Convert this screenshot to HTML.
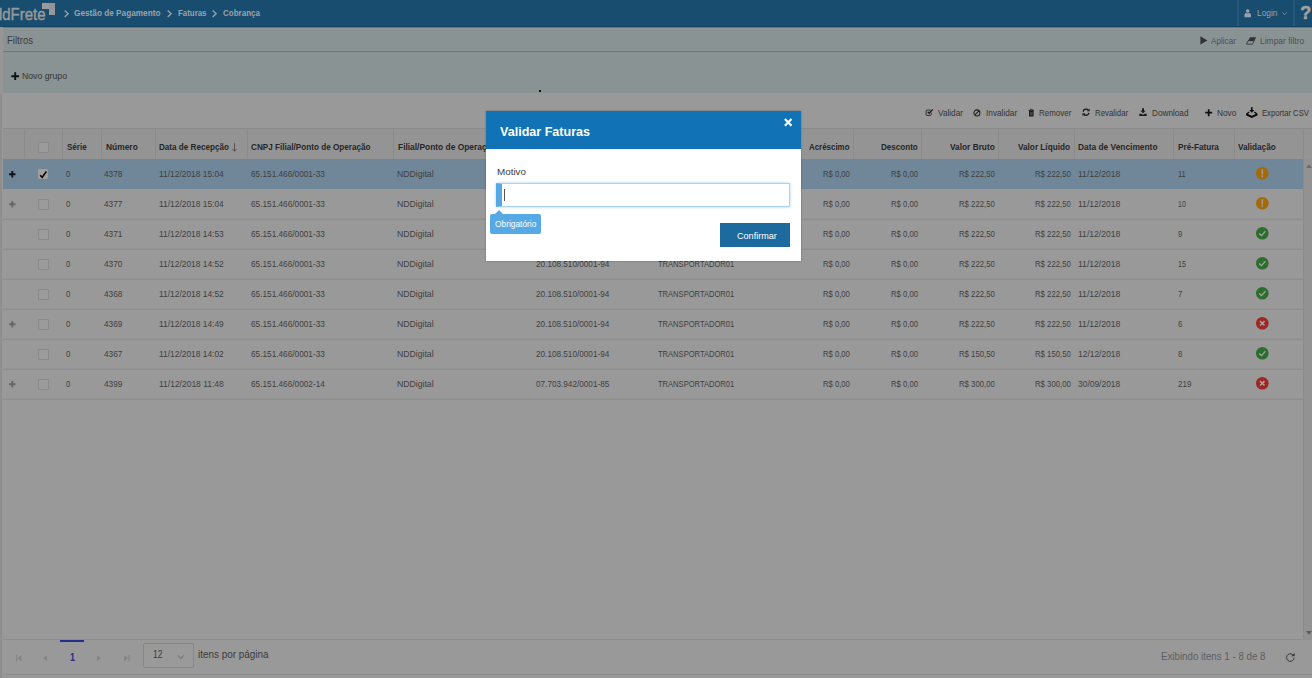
<!DOCTYPE html>
<html lang="pt-BR">
<head>
<meta charset="utf-8">
<title>Cobrança - Validar Faturas</title>
<style>
html,body{margin:0;padding:0;}
body{width:1312px;height:678px;overflow:hidden;background:#999999;position:relative;font-family:"Liberation Sans",sans-serif;}
.a{position:absolute;}
.t{position:absolute;white-space:pre;line-height:14px;height:14px;transform-origin:0 50%;font-family:"Liberation Sans",sans-serif;}
svg{position:absolute;overflow:visible;}
/* header */
#hdr{left:0;top:0;width:1312px;height:27px;background:#184d70;}
#filt{left:3px;top:27px;width:1309px;height:66px;background:#8a9394;}
#filtline{left:3px;top:51px;width:1309px;height:1px;background:#6f7778;}
#leftstrip{left:0;top:94px;width:1.7px;height:584px;background:#8e8e8e;}
/* grid */
#ghead{left:3px;top:128px;width:1309px;height:31px;background:#949494;border-top:1px solid #8a8a8a;box-sizing:border-box;}
.vl{position:absolute;top:128px;width:1px;height:31px;background:#8b8b8b;}
.hl{position:absolute;left:3px;width:1300px;height:1px;background:#8d8d8d;}
#sel{left:3px;top:159px;width:1300px;height:30px;background:#6f8799;}
.cb{position:absolute;width:10.7px;height:10.7px;box-sizing:border-box;border:1px solid #8a8a8a;background:#9b9b9b;border-radius:1px;}
#scroll{left:1303px;top:159px;width:9px;height:480px;background:#929292;border-left:1px solid #8c8c8c;box-sizing:border-box;}
#pager{left:3px;top:639px;width:1309px;height:36px;border-top:1px solid #8e8e8e;border-bottom:1px solid #8e8e8e;box-sizing:border-box;background:#999;}
/* modal */
#modal{left:486px;top:111px;width:314.6px;height:150px;background:#fff;z-index:20;box-shadow:0 0 2px rgba(0,0,0,.3);}
#mtitle{left:486px;top:111px;width:314.6px;height:38px;background:#1173b5;z-index:21;}
#minput{left:496px;top:183px;width:294px;height:24px;box-sizing:border-box;border:1px solid #a9d2f3;border-left:6px solid #55aae5;background:#fff;z-index:22;box-shadow:0 0 3px rgba(102,175,233,.6);border-radius:1px;}
#mcursor{left:504px;top:189px;width:1px;height:12px;background:#555;z-index:23;}
#mtip{left:490px;top:214px;width:51px;height:20px;background:#55aae5;border-radius:2px;z-index:23;}
#mtiparrow{left:494px;top:209.5px;width:0;height:0;border-left:5px solid transparent;border-right:5px solid transparent;border-bottom:5px solid #55aae5;z-index:23;}
#mbtn{left:720px;top:223px;width:70px;height:24px;background:#1d6a9e;z-index:22;}
</style>
</head>
<body>
<div class="a" id="leftstrip"></div>
<div class="a" style="left:0;top:27px;width:3px;height:67px;background:#969696"></div>
<div class="a" id="hdr"></div>
<div class="a" id="filt"></div>
<div class="a" id="filtline"></div>
<div class="a" id="ghead"></div>
<div class="a" id="sel"></div>
<div class="a" id="scroll"></div>
<div class="a" id="pager"></div>
<div class="a" style="left:42.3px;top:3px;width:6.4px;height:5.7px;background:#9b9b9b"></div>
<div class="a" style="left:48.7px;top:3px;width:6.2px;height:6.1px;background:#939598"></div>
<div class="a" style="left:48.7px;top:9px;width:6.2px;height:6.2px;background:#979899"></div>
<div class="a" style="left:0;top:26px;width:1312px;height:1px;background:#114566"></div>
<div class="a" style="left:3px;top:28px;width:1309px;height:1px;background:#939696"></div>
<div class="a" style="left:3px;top:27px;width:1309px;height:1px;background:#5f7683"></div>
<svg style="left:63.7px;top:9.5px" width="5.2" height="7.6" viewBox="0 0 6 9"><path d="M0.7 0.6 L4.8 4.5 L0.7 8.4" fill="none" stroke="#9aa1a7" stroke-width="1.6"/></svg>
<svg style="left:167.0px;top:9.5px" width="5.2" height="7.6" viewBox="0 0 6 9"><path d="M0.7 0.6 L4.8 4.5 L0.7 8.4" fill="none" stroke="#9aa1a7" stroke-width="1.6"/></svg>
<svg style="left:212.0px;top:9.5px" width="5.2" height="7.6" viewBox="0 0 6 9"><path d="M0.7 0.6 L4.8 4.5 L0.7 8.4" fill="none" stroke="#9aa1a7" stroke-width="1.6"/></svg>
<div class="a" style="left:1236.5px;top:0;width:2px;height:26px;background:#27587a"></div>
<div class="a" style="left:1293px;top:0;width:2px;height:26px;background:#27587a"></div>
<svg style="left:1244.4px;top:9.4px" width="7.4" height="8.4" viewBox="0 0 14 17"><circle cx="7" cy="4.2" r="3.6" fill="#9aa3aa"/><path d="M0.5 16.5 V12 Q0.5 8.5 4 8.3 Q7 10 10 8.3 Q13.5 8.5 13.5 12 V16.5 Z" fill="#9aa3aa"/></svg>
<svg style="left:1282px;top:11.5px" width="5" height="3.4" viewBox="0 0 10 6.8"><path d="M0.8 0.8 L5 5.4 L9.2 0.8" fill="none" stroke="#8a97a1" stroke-width="1.5"/></svg>
<svg style="left:1200.2px;top:36.4px" width="7.7" height="8.8" viewBox="0 0 7.5 9"><path d="M0.2 0.2 L7.4 4.5 L0.2 8.8 Z" fill="#333"/></svg>
<svg style="left:1246px;top:37px" width="10.5" height="7.6" viewBox="0 0 21 15.2"><path d="M8.2 0.4 H20.6 L16.4 8 H4 Z" fill="#333"/><path d="M4.4 7.4 H16.6 L12.8 14.3 H0.9 Z" fill="none" stroke="#333" stroke-width="1.7"/></svg>
<svg style="left:11px;top:71.5px" width="8.4" height="8.4" viewBox="0 0 8.4 8.4"><path d="M4.2 0.3 V8.1 M0.3 4.2 H8.1" stroke="#111" stroke-width="1.9"/></svg>
<div class="a" style="left:539px;top:89.5px;width:2px;height:2px;background:#111"></div>
<svg style="left:925.3px;top:108.2px" width="8.5" height="8.5" viewBox="0 0 17 17"><path d="M12.5 9.5 V13 Q12.5 14.8 10.7 14.8 H4 Q2.2 14.8 2.2 13 V6 Q2.2 4.2 4 4.2 H11" fill="none" stroke="#2a2a2a" stroke-width="1.9"/><path d="M5.5 7.8 L8.3 10.6 L15.5 2.8" fill="none" stroke="#1c1c1c" stroke-width="2.6"/></svg>
<svg style="left:973.2px;top:108.6px" width="7.8" height="7.8" viewBox="0 0 16 16"><circle cx="8" cy="8" r="6.2" fill="none" stroke="#1c1c1c" stroke-width="2.1"/><path d="M3.8 12.2 L12.2 3.8" stroke="#1c1c1c" stroke-width="2.1"/></svg>
<svg style="left:1028px;top:108.9px" width="6.6" height="7.8" viewBox="0 0 14 17"><path d="M0.8 3.2 H13.2" stroke="#1c1c1c" stroke-width="1.8"/><path d="M4.6 2.6 V0.9 H9.4 V2.6" fill="none" stroke="#1c1c1c" stroke-width="1.5"/><path d="M2 4.5 H12 V15 Q12 16.3 10.7 16.3 H3.3 Q2 16.3 2 15 Z" fill="#1c1c1c"/><path d="M5 6.5 V14 M7 6.5 V14 M9 6.5 V14" stroke="#8a8a8a" stroke-width="0.8"/></svg>
<svg style="left:1082.3px;top:108.3px" width="8" height="8.4" viewBox="0 0 16 17"><path d="M2.2 7.2 A6 6 0 0 1 12.6 4.2" fill="none" stroke="#151515" stroke-width="2.7"/><path d="M15.2 1 V6.6 H9.6 Z" fill="#1c1c1c"/><path d="M13.8 9.8 A6 6 0 0 1 3.4 12.8" fill="none" stroke="#151515" stroke-width="2.7"/><path d="M0.8 16 V10.4 H6.4 Z" fill="#1c1c1c"/></svg>
<svg style="left:1139px;top:108.3px" width="8" height="8.4" viewBox="0 0 16 17"><path d="M6 0.5 H10 V5.5 H13.3 L8 10.8 L2.7 5.5 H6 Z" fill="#1c1c1c"/><path d="M0.5 11.5 H4.6 L6.3 13.2 H9.7 L11.4 11.5 H15.5 V16.3 H0.5 Z" fill="#1c1c1c"/></svg>
<svg style="left:1204.8px;top:108.7px" width="7.4" height="7.4" viewBox="0 0 7.4 7.4"><path d="M3.7 0.2 V7.2 M0.2 3.7 H7.2" stroke="#111" stroke-width="1.7"/></svg>
<svg style="left:1246.3px;top:106.8px" width="11.6" height="11" viewBox="0 0 23 22"><path d="M9.8 0.5 H13.2 V6.2 H16.6 L11.5 11.6 L6.4 6.2 H9.8 Z" fill="#0c0c0c"/><path d="M6.3 9.8 L1.3 14.2 L11.5 19 L21.7 14.2 L16.7 9.8" fill="none" stroke="#0c0c0c" stroke-width="2.6" stroke-linejoin="round"/><path d="M0.4 14 L11.5 18.6 L22.6 14 V17.2 L11.5 22 L0.4 17.2 Z" fill="#0c0c0c"/></svg>
<div class="vl" style="left:24px"></div>
<div class="vl" style="left:62px"></div>
<div class="vl" style="left:101px"></div>
<div class="vl" style="left:155px"></div>
<div class="vl" style="left:247px"></div>
<div class="vl" style="left:393px"></div>
<div class="vl" style="left:531px"></div>
<div class="vl" style="left:653px"></div>
<div class="vl" style="left:853px"></div>
<div class="vl" style="left:921px"></div>
<div class="vl" style="left:998px"></div>
<div class="vl" style="left:1074px"></div>
<div class="vl" style="left:1173px"></div>
<div class="vl" style="left:1234px"></div>
<div class="vl" style="left:1303px"></div>
<svg style="left:231.8px;top:142.5px" width="5" height="9" viewBox="0 0 5 9"><path d="M2.5 0.3 V8 M0.5 6 L2.5 8.3 L4.5 6" fill="none" stroke="#444" stroke-width="0.8"/></svg>
<div class="hl" style="top:218px;background:#949494"></div>
<div class="hl" style="top:219px;background:#8e8e8e"></div>
<div class="hl" style="top:248px;background:#949494"></div>
<div class="hl" style="top:249px;background:#8e8e8e"></div>
<div class="hl" style="top:278px;background:#949494"></div>
<div class="hl" style="top:279px;background:#8e8e8e"></div>
<div class="hl" style="top:308px;background:#949494"></div>
<div class="hl" style="top:309px;background:#8e8e8e"></div>
<div class="hl" style="top:338px;background:#949494"></div>
<div class="hl" style="top:339px;background:#8e8e8e"></div>
<div class="hl" style="top:368px;background:#949494"></div>
<div class="hl" style="top:369px;background:#8e8e8e"></div>
<div class="hl" style="top:398px;background:#949494"></div>
<div class="hl" style="top:399px;background:#8e8e8e"></div>
<div class="cb" style="left:38.3px;top:142.2px"></div>
<div class="cb" style="left:38.1px;top:169.1px;width:10px;height:10.3px;background:#a3a09e;border-color:#9f9c9a"></div>
<svg style="left:38.1px;top:169.1px" width="10" height="10" viewBox="0 0 10 10"><path d="M2.1 6.3 L4.2 8.3 L8.4 2.4" fill="none" stroke="#000" stroke-width="1.55"/></svg>
<div class="cb" style="left:38.3px;top:198.9px"></div>
<div class="cb" style="left:38.3px;top:228.9px"></div>
<div class="cb" style="left:38.3px;top:258.9px"></div>
<div class="cb" style="left:38.3px;top:288.9px"></div>
<div class="cb" style="left:38.3px;top:318.9px"></div>
<div class="cb" style="left:38.3px;top:348.9px"></div>
<div class="cb" style="left:38.3px;top:378.9px"></div>
<svg style="left:8.8px;top:170.7px" width="6.6" height="6.6" viewBox="0 0 6.6 6.6"><path d="M3.3 0.1 V6.5 M0.1 3.3 H6.5" stroke="#111" stroke-width="1.9"/></svg>
<svg style="left:8.8px;top:200.7px" width="6.6" height="6.6" viewBox="0 0 6.6 6.6"><path d="M3.3 0.1 V6.5 M0.1 3.3 H6.5" stroke="#666" stroke-width="1.9"/></svg>
<svg style="left:8.8px;top:320.7px" width="6.6" height="6.6" viewBox="0 0 6.6 6.6"><path d="M3.3 0.1 V6.5 M0.1 3.3 H6.5" stroke="#666" stroke-width="1.9"/></svg>
<svg style="left:8.8px;top:380.7px" width="6.6" height="6.6" viewBox="0 0 6.6 6.6"><path d="M3.3 0.1 V6.5 M0.1 3.3 H6.5" stroke="#666" stroke-width="1.9"/></svg>
<svg style="left:1255.7px;top:166.7px" width="12.6" height="12.6" viewBox="0 0 24 24"><circle cx="12" cy="12" r="12" fill="#a66a05"/><rect x="10.4" y="4.6" width="3.2" height="9.6" fill="#9a9a9a"/><rect x="10.4" y="16" width="3.2" height="3.2" fill="#9a9a9a"/></svg>
<svg style="left:1255.7px;top:196.7px" width="12.6" height="12.6" viewBox="0 0 24 24"><circle cx="12" cy="12" r="12" fill="#a66a05"/><rect x="10.4" y="4.6" width="3.2" height="9.6" fill="#9a9a9a"/><rect x="10.4" y="16" width="3.2" height="3.2" fill="#9a9a9a"/></svg>
<svg style="left:1255.7px;top:226.7px" width="12.6" height="12.6" viewBox="0 0 24 24"><circle cx="12" cy="12" r="12" fill="#2b6e2d"/><path d="M6 12.2 L10.3 16.4 L18 8.2" fill="none" stroke="#a0a0a0" stroke-width="2.6"/></svg>
<svg style="left:1255.7px;top:256.7px" width="12.6" height="12.6" viewBox="0 0 24 24"><circle cx="12" cy="12" r="12" fill="#2b6e2d"/><path d="M6 12.2 L10.3 16.4 L18 8.2" fill="none" stroke="#a0a0a0" stroke-width="2.6"/></svg>
<svg style="left:1255.7px;top:286.7px" width="12.6" height="12.6" viewBox="0 0 24 24"><circle cx="12" cy="12" r="12" fill="#2b6e2d"/><path d="M6 12.2 L10.3 16.4 L18 8.2" fill="none" stroke="#a0a0a0" stroke-width="2.6"/></svg>
<svg style="left:1255.7px;top:316.7px" width="12.6" height="12.6" viewBox="0 0 24 24"><circle cx="12" cy="12" r="12" fill="#a12521"/><path d="M7.8 7.8 L16.2 16.2 M16.2 7.8 L7.8 16.2" fill="none" stroke="#a5a5a5" stroke-width="3"/></svg>
<svg style="left:1255.7px;top:346.7px" width="12.6" height="12.6" viewBox="0 0 24 24"><circle cx="12" cy="12" r="12" fill="#2b6e2d"/><path d="M6 12.2 L10.3 16.4 L18 8.2" fill="none" stroke="#a0a0a0" stroke-width="2.6"/></svg>
<svg style="left:1255.7px;top:376.7px" width="12.6" height="12.6" viewBox="0 0 24 24"><circle cx="12" cy="12" r="12" fill="#a12521"/><path d="M7.8 7.8 L16.2 16.2 M16.2 7.8 L7.8 16.2" fill="none" stroke="#a5a5a5" stroke-width="3"/></svg>
<svg style="left:1305.5px;top:163.8px" width="6" height="4" viewBox="0 0 6 4"><path d="M0 4 L3 0.3 L6 4 Z" fill="#6a6a6a"/></svg>
<svg style="left:1305.5px;top:631px" width="6" height="4" viewBox="0 0 6 4"><path d="M0 0 L3 3.7 L6 0 Z" fill="#5a5a5a"/></svg>
<div class="a" style="left:60px;top:639.5px;width:24px;height:2px;background:#232d8c"></div>
<svg style="left:16px;top:654.5px" width="5.5" height="6.5" viewBox="0 0 5.5 6.5"><path d="M0.5 0 V6.5" stroke="#838383" stroke-width="1"/><path d="M5.3 0.2 L1.6 3.25 L5.3 6.3 Z" fill="#838383"/></svg>
<svg style="left:43.3px;top:654.5px" width="4" height="6.5" viewBox="0 0 4 6.5"><path d="M3.8 0.2 L0.2 3.25 L3.8 6.3 Z" fill="#838383"/></svg>
<svg style="left:97.3px;top:654.5px" width="4" height="6.5" viewBox="0 0 4 6.5"><path d="M0.2 0.2 L3.8 3.25 L0.2 6.3 Z" fill="#838383"/></svg>
<svg style="left:123.8px;top:654.5px" width="5.5" height="6.5" viewBox="0 0 5.5 6.5"><path d="M5 0 V6.5" stroke="#838383" stroke-width="1"/><path d="M0.2 0.2 L3.9 3.25 L0.2 6.3 Z" fill="#838383"/></svg>
<div class="a" style="left:143px;top:643px;width:51px;height:24.5px;box-sizing:border-box;border:1px solid #878787;border-radius:2px;background:#9a9a9a"></div>
<svg style="left:177.2px;top:655px" width="7.6" height="4.4" viewBox="0 0 8 5"><path d="M0.5 0.5 L4 4.2 L7.5 0.5" fill="none" stroke="#787878" stroke-width="1.3"/></svg>
<svg style="left:1285.3px;top:652px" width="11" height="11" viewBox="0 0 22 22"><path d="M18.2 11.5 A7.6 7.6 0 1 1 15.6 5.4" fill="none" stroke="#3a3a3a" stroke-width="2"/><path d="M19.3 1.6 V8.3 H12.6 Z" fill="#3a3a3a"/></svg>
<svg style="left:783.7px;top:118.1px;z-index:30" width="8.4" height="8.6" viewBox="0 0 8.4 8.6"><path d="M0.9 0.9 L7.5 7.7 M7.5 0.9 L0.9 7.7" stroke="#fff" stroke-width="2.1"/></svg>
<span class="t" style="left:74.0px;top:5.6px;font-size:9.2px;font-weight:700;color:#9aa3aa;transform:scaleX(0.8964);">Gestão de Pagamento</span>
<span class="t" style="left:177.5px;top:5.6px;font-size:9.2px;font-weight:700;color:#9aa3aa;transform:scaleX(0.8584);">Faturas</span>
<span class="t" style="left:223.0px;top:5.6px;font-size:9.2px;font-weight:700;color:#9aa3aa;transform:scaleX(0.8728);">Cobrança</span>
<span class="t" style="left:1256.5px;top:6.0px;font-size:9.4px;font-weight:400;color:#9aa3aa;transform:scaleX(0.8931);">Login</span>
<span class="t" style="left:-6.5px;top:8.0px;font-size:17px;font-weight:400;color:#999999;transform:scaleX(0.8789);-webkit-text-stroke:0.45px #999999;">ddFrete</span>
<span class="t" style="left:1300.3px;top:6.2px;font-size:18px;font-weight:700;color:#a2a2a2;transform:scaleX(1.0000);-webkit-text-stroke:0.5px #a2a2a2;">?</span>
<span class="t" style="left:7.0px;top:33.6px;font-size:10px;font-weight:400;color:#3a3a3a;transform:scaleX(0.9547);">Filtros</span>
<span class="t" style="left:1211.3px;top:33.8px;font-size:9.5px;font-weight:400;color:#4f4f4f;transform:scaleX(0.8572);">Aplicar</span>
<span class="t" style="left:1259.8px;top:33.8px;font-size:9.5px;font-weight:400;color:#4f4f4f;transform:scaleX(0.8907);">Limpar filtro</span>
<span class="t" style="left:22.0px;top:68.8px;font-size:9.5px;font-weight:400;color:#333;transform:scaleX(0.9160);">Novo grupo</span>
<span class="t" style="left:937.8px;top:105.6px;font-size:9.5px;font-weight:400;color:#333;transform:scaleX(0.8658);">Validar</span>
<span class="t" style="left:985.8px;top:105.6px;font-size:9.5px;font-weight:400;color:#333;transform:scaleX(0.8686);">Invalidar</span>
<span class="t" style="left:1039.4px;top:105.6px;font-size:9.5px;font-weight:400;color:#333;transform:scaleX(0.8379);">Remover</span>
<span class="t" style="left:1094.7px;top:105.6px;font-size:9.5px;font-weight:400;color:#333;transform:scaleX(0.8246);">Revalidar</span>
<span class="t" style="left:1152.0px;top:105.6px;font-size:9.5px;font-weight:400;color:#333;transform:scaleX(0.8639);">Download</span>
<span class="t" style="left:1216.7px;top:105.6px;font-size:9.5px;font-weight:400;color:#333;transform:scaleX(0.8699);">Novo</span>
<span class="t" style="left:1261.7px;top:105.6px;font-size:9.5px;font-weight:400;color:#333;transform:scaleX(0.8075);">Exportar CSV</span>
<span class="t" style="left:66.6px;top:139.8px;font-size:9.3px;font-weight:700;color:#262626;transform:scaleX(0.8659);">Série</span>
<span class="t" style="left:105.5px;top:139.8px;font-size:9.3px;font-weight:700;color:#262626;transform:scaleX(0.9049);">Número</span>
<span class="t" style="left:159.3px;top:139.8px;font-size:9.3px;font-weight:700;color:#262626;transform:scaleX(0.8727);">Data de Recepção</span>
<span class="t" style="left:251.4px;top:139.8px;font-size:9.3px;font-weight:700;color:#262626;transform:scaleX(0.8762);">CNPJ Filial/Ponto de Operação</span>
<span class="t" style="left:397.8px;top:139.8px;font-size:9.3px;font-weight:700;color:#262626;transform:scaleX(0.9026);">Filial/Ponto de Operação</span>
<span class="t" style="left:808.7px;top:139.8px;font-size:9.3px;font-weight:700;color:#262626;transform:scaleX(0.8518);">Acréscimo</span>
<span class="t" style="left:881.2px;top:139.8px;font-size:9.3px;font-weight:700;color:#262626;transform:scaleX(0.8688);">Desconto</span>
<span class="t" style="left:949.5px;top:139.8px;font-size:9.3px;font-weight:700;color:#262626;transform:scaleX(0.8940);">Valor Bruto</span>
<span class="t" style="left:1018.3px;top:139.8px;font-size:9.3px;font-weight:700;color:#262626;transform:scaleX(0.8830);">Valor Líquido</span>
<span class="t" style="left:1078.0px;top:139.8px;font-size:9.3px;font-weight:700;color:#262626;transform:scaleX(0.8997);">Data de Vencimento</span>
<span class="t" style="left:1177.6px;top:139.8px;font-size:9.3px;font-weight:700;color:#262626;transform:scaleX(0.8796);">Pré-Fatura</span>
<span class="t" style="left:1238.3px;top:139.8px;font-size:9.3px;font-weight:700;color:#262626;transform:scaleX(0.8787);">Validação</span>
<span class="t" style="left:66.3px;top:166.6px;font-size:9.6px;font-weight:400;color:#3f3f3f;transform:scaleX(0.8047);">0</span>
<span class="t" style="left:104.0px;top:166.6px;font-size:9.6px;font-weight:400;color:#3f3f3f;transform:scaleX(0.8668);">4378</span>
<span class="t" style="left:158.5px;top:166.6px;font-size:9.6px;font-weight:400;color:#3f3f3f;transform:scaleX(0.8759);">11/12/2018 15:04</span>
<span class="t" style="left:250.5px;top:166.6px;font-size:9.6px;font-weight:400;color:#3f3f3f;transform:scaleX(0.8592);">65.151.466/0001-33</span>
<span class="t" style="left:396.7px;top:166.6px;font-size:9.6px;font-weight:400;color:#3f3f3f;transform:scaleX(0.9030);">NDDigital</span>
<span class="t" style="left:535.5px;top:166.6px;font-size:9.6px;font-weight:400;color:#3f3f3f;transform:scaleX(0.8534);">20.108.510/0001-94</span>
<span class="t" style="left:658.0px;top:166.6px;font-size:9.6px;font-weight:400;color:#3f3f3f;transform:scaleX(0.7882);">TRANSPORTADOR01</span>
<span class="t" style="left:822.5px;top:166.6px;font-size:9.6px;font-weight:400;color:#3f3f3f;transform:scaleX(0.8004);">R$ 0,00</span>
<span class="t" style="left:891.0px;top:166.6px;font-size:9.6px;font-weight:400;color:#3f3f3f;transform:scaleX(0.8033);">R$ 0,00</span>
<span class="t" style="left:958.6px;top:166.6px;font-size:9.6px;font-weight:400;color:#3f3f3f;transform:scaleX(0.8085);">R$ 222,50</span>
<span class="t" style="left:1034.6px;top:166.6px;font-size:9.6px;font-weight:400;color:#3f3f3f;transform:scaleX(0.8085);">R$ 222,50</span>
<span class="t" style="left:1078.0px;top:166.6px;font-size:9.6px;font-weight:400;color:#3f3f3f;transform:scaleX(0.8919);">11/12/2018</span>
<span class="t" style="left:1177.6px;top:166.6px;font-size:9.6px;font-weight:400;color:#3f3f3f;transform:scaleX(0.7824);">11</span>
<span class="t" style="left:66.3px;top:196.6px;font-size:9.6px;font-weight:400;color:#3f3f3f;transform:scaleX(0.8047);">0</span>
<span class="t" style="left:104.0px;top:196.6px;font-size:9.6px;font-weight:400;color:#3f3f3f;transform:scaleX(0.8668);">4377</span>
<span class="t" style="left:158.5px;top:196.6px;font-size:9.6px;font-weight:400;color:#3f3f3f;transform:scaleX(0.8759);">11/12/2018 15:04</span>
<span class="t" style="left:250.5px;top:196.6px;font-size:9.6px;font-weight:400;color:#3f3f3f;transform:scaleX(0.8592);">65.151.466/0001-33</span>
<span class="t" style="left:396.7px;top:196.6px;font-size:9.6px;font-weight:400;color:#3f3f3f;transform:scaleX(0.9030);">NDDigital</span>
<span class="t" style="left:535.5px;top:196.6px;font-size:9.6px;font-weight:400;color:#3f3f3f;transform:scaleX(0.8534);">20.108.510/0001-94</span>
<span class="t" style="left:658.0px;top:196.6px;font-size:9.6px;font-weight:400;color:#3f3f3f;transform:scaleX(0.7882);">TRANSPORTADOR01</span>
<span class="t" style="left:822.5px;top:196.6px;font-size:9.6px;font-weight:400;color:#3f3f3f;transform:scaleX(0.8004);">R$ 0,00</span>
<span class="t" style="left:891.0px;top:196.6px;font-size:9.6px;font-weight:400;color:#3f3f3f;transform:scaleX(0.8033);">R$ 0,00</span>
<span class="t" style="left:958.6px;top:196.6px;font-size:9.6px;font-weight:400;color:#3f3f3f;transform:scaleX(0.8085);">R$ 222,50</span>
<span class="t" style="left:1034.6px;top:196.6px;font-size:9.6px;font-weight:400;color:#3f3f3f;transform:scaleX(0.8085);">R$ 222,50</span>
<span class="t" style="left:1078.0px;top:196.6px;font-size:9.6px;font-weight:400;color:#3f3f3f;transform:scaleX(0.8919);">11/12/2018</span>
<span class="t" style="left:1177.6px;top:196.6px;font-size:9.6px;font-weight:400;color:#3f3f3f;transform:scaleX(0.7309);">10</span>
<span class="t" style="left:66.3px;top:226.6px;font-size:9.6px;font-weight:400;color:#3f3f3f;transform:scaleX(0.8047);">0</span>
<span class="t" style="left:104.0px;top:226.6px;font-size:9.6px;font-weight:400;color:#3f3f3f;transform:scaleX(0.8668);">4371</span>
<span class="t" style="left:158.5px;top:226.6px;font-size:9.6px;font-weight:400;color:#3f3f3f;transform:scaleX(0.8759);">11/12/2018 14:53</span>
<span class="t" style="left:250.5px;top:226.6px;font-size:9.6px;font-weight:400;color:#3f3f3f;transform:scaleX(0.8592);">65.151.466/0001-33</span>
<span class="t" style="left:396.7px;top:226.6px;font-size:9.6px;font-weight:400;color:#3f3f3f;transform:scaleX(0.9030);">NDDigital</span>
<span class="t" style="left:535.5px;top:226.6px;font-size:9.6px;font-weight:400;color:#3f3f3f;transform:scaleX(0.8534);">20.108.510/0001-94</span>
<span class="t" style="left:658.0px;top:226.6px;font-size:9.6px;font-weight:400;color:#3f3f3f;transform:scaleX(0.7882);">TRANSPORTADOR01</span>
<span class="t" style="left:822.5px;top:226.6px;font-size:9.6px;font-weight:400;color:#3f3f3f;transform:scaleX(0.8004);">R$ 0,00</span>
<span class="t" style="left:891.0px;top:226.6px;font-size:9.6px;font-weight:400;color:#3f3f3f;transform:scaleX(0.8033);">R$ 0,00</span>
<span class="t" style="left:958.6px;top:226.6px;font-size:9.6px;font-weight:400;color:#3f3f3f;transform:scaleX(0.8085);">R$ 222,50</span>
<span class="t" style="left:1034.6px;top:226.6px;font-size:9.6px;font-weight:400;color:#3f3f3f;transform:scaleX(0.8085);">R$ 222,50</span>
<span class="t" style="left:1078.0px;top:226.6px;font-size:9.6px;font-weight:400;color:#3f3f3f;transform:scaleX(0.8919);">11/12/2018</span>
<span class="t" style="left:1177.6px;top:226.6px;font-size:9.6px;font-weight:400;color:#3f3f3f;transform:scaleX(0.8047);">9</span>
<span class="t" style="left:66.3px;top:256.6px;font-size:9.6px;font-weight:400;color:#3f3f3f;transform:scaleX(0.8047);">0</span>
<span class="t" style="left:104.0px;top:256.6px;font-size:9.6px;font-weight:400;color:#3f3f3f;transform:scaleX(0.8668);">4370</span>
<span class="t" style="left:158.5px;top:256.6px;font-size:9.6px;font-weight:400;color:#3f3f3f;transform:scaleX(0.8759);">11/12/2018 14:52</span>
<span class="t" style="left:250.5px;top:256.6px;font-size:9.6px;font-weight:400;color:#3f3f3f;transform:scaleX(0.8592);">65.151.466/0001-33</span>
<span class="t" style="left:396.7px;top:256.6px;font-size:9.6px;font-weight:400;color:#3f3f3f;transform:scaleX(0.9030);">NDDigital</span>
<span class="t" style="left:535.5px;top:256.6px;font-size:9.6px;font-weight:400;color:#3f3f3f;transform:scaleX(0.8534);">20.108.510/0001-94</span>
<span class="t" style="left:658.0px;top:256.6px;font-size:9.6px;font-weight:400;color:#3f3f3f;transform:scaleX(0.7882);">TRANSPORTADOR01</span>
<span class="t" style="left:822.5px;top:256.6px;font-size:9.6px;font-weight:400;color:#3f3f3f;transform:scaleX(0.8004);">R$ 0,00</span>
<span class="t" style="left:891.0px;top:256.6px;font-size:9.6px;font-weight:400;color:#3f3f3f;transform:scaleX(0.8033);">R$ 0,00</span>
<span class="t" style="left:958.6px;top:256.6px;font-size:9.6px;font-weight:400;color:#3f3f3f;transform:scaleX(0.8085);">R$ 222,50</span>
<span class="t" style="left:1034.6px;top:256.6px;font-size:9.6px;font-weight:400;color:#3f3f3f;transform:scaleX(0.8085);">R$ 222,50</span>
<span class="t" style="left:1078.0px;top:256.6px;font-size:9.6px;font-weight:400;color:#3f3f3f;transform:scaleX(0.8919);">11/12/2018</span>
<span class="t" style="left:1177.6px;top:256.6px;font-size:9.6px;font-weight:400;color:#3f3f3f;transform:scaleX(0.7309);">15</span>
<span class="t" style="left:66.3px;top:286.6px;font-size:9.6px;font-weight:400;color:#3f3f3f;transform:scaleX(0.8047);">0</span>
<span class="t" style="left:104.0px;top:286.6px;font-size:9.6px;font-weight:400;color:#3f3f3f;transform:scaleX(0.8668);">4368</span>
<span class="t" style="left:158.5px;top:286.6px;font-size:9.6px;font-weight:400;color:#3f3f3f;transform:scaleX(0.8759);">11/12/2018 14:52</span>
<span class="t" style="left:250.5px;top:286.6px;font-size:9.6px;font-weight:400;color:#3f3f3f;transform:scaleX(0.8592);">65.151.466/0001-33</span>
<span class="t" style="left:396.7px;top:286.6px;font-size:9.6px;font-weight:400;color:#3f3f3f;transform:scaleX(0.9030);">NDDigital</span>
<span class="t" style="left:535.5px;top:286.6px;font-size:9.6px;font-weight:400;color:#3f3f3f;transform:scaleX(0.8534);">20.108.510/0001-94</span>
<span class="t" style="left:658.0px;top:286.6px;font-size:9.6px;font-weight:400;color:#3f3f3f;transform:scaleX(0.7882);">TRANSPORTADOR01</span>
<span class="t" style="left:822.5px;top:286.6px;font-size:9.6px;font-weight:400;color:#3f3f3f;transform:scaleX(0.8004);">R$ 0,00</span>
<span class="t" style="left:891.0px;top:286.6px;font-size:9.6px;font-weight:400;color:#3f3f3f;transform:scaleX(0.8033);">R$ 0,00</span>
<span class="t" style="left:958.6px;top:286.6px;font-size:9.6px;font-weight:400;color:#3f3f3f;transform:scaleX(0.8085);">R$ 222,50</span>
<span class="t" style="left:1034.6px;top:286.6px;font-size:9.6px;font-weight:400;color:#3f3f3f;transform:scaleX(0.8085);">R$ 222,50</span>
<span class="t" style="left:1078.0px;top:286.6px;font-size:9.6px;font-weight:400;color:#3f3f3f;transform:scaleX(0.8919);">11/12/2018</span>
<span class="t" style="left:1177.6px;top:286.6px;font-size:9.6px;font-weight:400;color:#3f3f3f;transform:scaleX(0.8047);">7</span>
<span class="t" style="left:66.3px;top:316.6px;font-size:9.6px;font-weight:400;color:#3f3f3f;transform:scaleX(0.8047);">0</span>
<span class="t" style="left:104.0px;top:316.6px;font-size:9.6px;font-weight:400;color:#3f3f3f;transform:scaleX(0.8668);">4369</span>
<span class="t" style="left:158.5px;top:316.6px;font-size:9.6px;font-weight:400;color:#3f3f3f;transform:scaleX(0.8759);">11/12/2018 14:49</span>
<span class="t" style="left:250.5px;top:316.6px;font-size:9.6px;font-weight:400;color:#3f3f3f;transform:scaleX(0.8592);">65.151.466/0001-33</span>
<span class="t" style="left:396.7px;top:316.6px;font-size:9.6px;font-weight:400;color:#3f3f3f;transform:scaleX(0.9030);">NDDigital</span>
<span class="t" style="left:535.5px;top:316.6px;font-size:9.6px;font-weight:400;color:#3f3f3f;transform:scaleX(0.8534);">20.108.510/0001-94</span>
<span class="t" style="left:658.0px;top:316.6px;font-size:9.6px;font-weight:400;color:#3f3f3f;transform:scaleX(0.7882);">TRANSPORTADOR01</span>
<span class="t" style="left:822.5px;top:316.6px;font-size:9.6px;font-weight:400;color:#3f3f3f;transform:scaleX(0.8004);">R$ 0,00</span>
<span class="t" style="left:891.0px;top:316.6px;font-size:9.6px;font-weight:400;color:#3f3f3f;transform:scaleX(0.8033);">R$ 0,00</span>
<span class="t" style="left:958.6px;top:316.6px;font-size:9.6px;font-weight:400;color:#3f3f3f;transform:scaleX(0.8085);">R$ 222,50</span>
<span class="t" style="left:1034.6px;top:316.6px;font-size:9.6px;font-weight:400;color:#3f3f3f;transform:scaleX(0.8085);">R$ 222,50</span>
<span class="t" style="left:1078.0px;top:316.6px;font-size:9.6px;font-weight:400;color:#3f3f3f;transform:scaleX(0.8919);">11/12/2018</span>
<span class="t" style="left:1177.6px;top:316.6px;font-size:9.6px;font-weight:400;color:#3f3f3f;transform:scaleX(0.8047);">6</span>
<span class="t" style="left:66.3px;top:346.6px;font-size:9.6px;font-weight:400;color:#3f3f3f;transform:scaleX(0.8047);">0</span>
<span class="t" style="left:104.0px;top:346.6px;font-size:9.6px;font-weight:400;color:#3f3f3f;transform:scaleX(0.8668);">4367</span>
<span class="t" style="left:158.5px;top:346.6px;font-size:9.6px;font-weight:400;color:#3f3f3f;transform:scaleX(0.8759);">11/12/2018 14:02</span>
<span class="t" style="left:250.5px;top:346.6px;font-size:9.6px;font-weight:400;color:#3f3f3f;transform:scaleX(0.8592);">65.151.466/0001-33</span>
<span class="t" style="left:396.7px;top:346.6px;font-size:9.6px;font-weight:400;color:#3f3f3f;transform:scaleX(0.9030);">NDDigital</span>
<span class="t" style="left:535.5px;top:346.6px;font-size:9.6px;font-weight:400;color:#3f3f3f;transform:scaleX(0.8534);">20.108.510/0001-94</span>
<span class="t" style="left:658.0px;top:346.6px;font-size:9.6px;font-weight:400;color:#3f3f3f;transform:scaleX(0.7882);">TRANSPORTADOR01</span>
<span class="t" style="left:822.5px;top:346.6px;font-size:9.6px;font-weight:400;color:#3f3f3f;transform:scaleX(0.8004);">R$ 0,00</span>
<span class="t" style="left:891.0px;top:346.6px;font-size:9.6px;font-weight:400;color:#3f3f3f;transform:scaleX(0.8033);">R$ 0,00</span>
<span class="t" style="left:958.6px;top:346.6px;font-size:9.6px;font-weight:400;color:#3f3f3f;transform:scaleX(0.8085);">R$ 150,50</span>
<span class="t" style="left:1034.6px;top:346.6px;font-size:9.6px;font-weight:400;color:#3f3f3f;transform:scaleX(0.8085);">R$ 150,50</span>
<span class="t" style="left:1078.0px;top:346.6px;font-size:9.6px;font-weight:400;color:#3f3f3f;transform:scaleX(0.8789);">12/12/2018</span>
<span class="t" style="left:1177.6px;top:346.6px;font-size:9.6px;font-weight:400;color:#3f3f3f;transform:scaleX(0.8047);">8</span>
<span class="t" style="left:66.3px;top:376.6px;font-size:9.6px;font-weight:400;color:#3f3f3f;transform:scaleX(0.8047);">0</span>
<span class="t" style="left:104.0px;top:376.6px;font-size:9.6px;font-weight:400;color:#3f3f3f;transform:scaleX(0.8668);">4399</span>
<span class="t" style="left:158.5px;top:376.6px;font-size:9.6px;font-weight:400;color:#3f3f3f;transform:scaleX(0.8845);">11/12/2018 11:48</span>
<span class="t" style="left:250.5px;top:376.6px;font-size:9.6px;font-weight:400;color:#3f3f3f;transform:scaleX(0.8592);">65.151.466/0002-14</span>
<span class="t" style="left:396.7px;top:376.6px;font-size:9.6px;font-weight:400;color:#3f3f3f;transform:scaleX(0.9030);">NDDigital</span>
<span class="t" style="left:535.5px;top:376.6px;font-size:9.6px;font-weight:400;color:#3f3f3f;transform:scaleX(0.8534);">07.703.942/0001-85</span>
<span class="t" style="left:658.0px;top:376.6px;font-size:9.6px;font-weight:400;color:#3f3f3f;transform:scaleX(0.7882);">TRANSPORTADOR01</span>
<span class="t" style="left:822.5px;top:376.6px;font-size:9.6px;font-weight:400;color:#3f3f3f;transform:scaleX(0.8004);">R$ 0,00</span>
<span class="t" style="left:891.0px;top:376.6px;font-size:9.6px;font-weight:400;color:#3f3f3f;transform:scaleX(0.8033);">R$ 0,00</span>
<span class="t" style="left:958.6px;top:376.6px;font-size:9.6px;font-weight:400;color:#3f3f3f;transform:scaleX(0.8085);">R$ 300,00</span>
<span class="t" style="left:1034.6px;top:376.6px;font-size:9.6px;font-weight:400;color:#3f3f3f;transform:scaleX(0.8085);">R$ 300,00</span>
<span class="t" style="left:1078.0px;top:376.6px;font-size:9.6px;font-weight:400;color:#3f3f3f;transform:scaleX(0.8789);">30/09/2018</span>
<span class="t" style="left:1177.6px;top:376.6px;font-size:9.6px;font-weight:400;color:#3f3f3f;transform:scaleX(0.8367);">219</span>
<span class="t" style="left:69.5px;top:650.5px;font-size:10px;font-weight:700;color:#232d8c;transform:scaleX(0.8989);">1</span>
<span class="t" style="left:153.0px;top:648.0px;font-size:10.2px;font-weight:400;color:#3a3a3a;transform:scaleX(0.8375);">12</span>
<span class="t" style="left:198.0px;top:648.0px;font-size:10.2px;font-weight:400;color:#3a3a3a;transform:scaleX(0.9724);">itens por página</span>
<span class="t" style="left:1161.0px;top:650.3px;font-size:10.2px;font-weight:400;color:#5e5e5e;transform:scaleX(0.9560);">Exibindo itens 1 - 8 de 8</span>
<span class="t" style="left:500.0px;top:124.5px;font-size:12.6px;font-weight:700;color:#fff;transform:scaleX(0.9967);z-index:30;">Validar Faturas</span>
<span class="t" style="left:496.5px;top:165.3px;font-size:9.3px;font-weight:400;color:#3c3c3c;transform:scaleX(1.0588);z-index:30;">Motivo</span>
<span class="t" style="left:495.0px;top:217.3px;font-size:8.6px;font-weight:400;color:#fff;transform:scaleX(0.9714);z-index:31;">Obrigatório</span>
<span class="t" style="left:737.2px;top:228.8px;font-size:9.3px;font-weight:400;color:#fff;transform:scaleX(0.9752);z-index:31;">Confirmar</span>
<div class="a" id="modal"></div>
<div class="a" id="mtitle"></div>
<div class="a" id="minput"></div>
<div class="a" id="mcursor"></div>
<div class="a" id="mtip"></div>
<div class="a" id="mtiparrow"></div>
<div class="a" id="mbtn"></div>
</body>
</html>
